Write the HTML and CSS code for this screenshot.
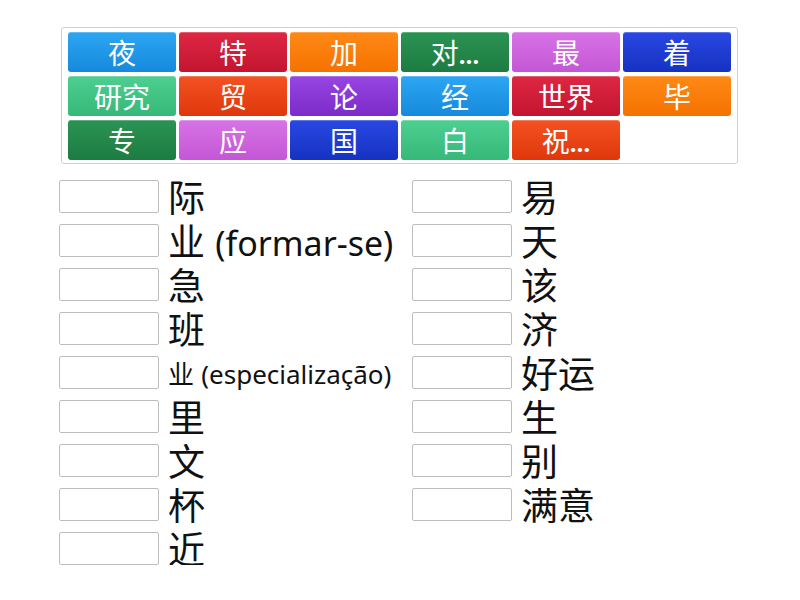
FILE: index.html
```html
<!DOCTYPE html>
<html lang="zh">
<head>
<meta charset="utf-8">
<title>Match</title>
<link rel="stylesheet" href="styles.css">
</head>
<body>
<div class="bank">
  <div class="tile blue">夜</div>
  <div class="tile red">特</div>
  <div class="tile orange">加</div>
  <div class="tile dkgreen">对<span class="dots">…</span></div>
  <div class="tile pink">最</div>
  <div class="tile navy">着</div>
  <div class="tile ltgreen">研究</div>
  <div class="tile redorange">贸</div>
  <div class="tile violet">论</div>
  <div class="tile blue">经</div>
  <div class="tile red">世界</div>
  <div class="tile orange">毕</div>
  <div class="tile dkgreen">专</div>
  <div class="tile pink">应</div>
  <div class="tile navy">国</div>
  <div class="tile ltgreen">白</div>
  <div class="tile redorange">祝<span class="dots">…</span></div>
</div>
<div class="answers">
  <div class="col">
    <div class="row"><div class="slot"></div><div class="label">际</div></div>
    <div class="row"><div class="slot"></div><div class="label">业 <span class="latin">(formar-se)</span></div></div>
    <div class="row"><div class="slot"></div><div class="label">急</div></div>
    <div class="row"><div class="slot"></div><div class="label">班</div></div>
    <div class="row"><div class="slot"></div><div class="label small">业 <span class="latin-small">(especialização)</span></div></div>
    <div class="row"><div class="slot"></div><div class="label">里</div></div>
    <div class="row"><div class="slot"></div><div class="label">文</div></div>
    <div class="row"><div class="slot"></div><div class="label">杯</div></div>
    <div class="row"><div class="slot"></div><div class="label">近</div></div>
  </div>
  <div class="col">
    <div class="row"><div class="slot"></div><div class="label">易</div></div>
    <div class="row"><div class="slot"></div><div class="label">天</div></div>
    <div class="row"><div class="slot"></div><div class="label">该</div></div>
    <div class="row"><div class="slot"></div><div class="label">济</div></div>
    <div class="row"><div class="slot"></div><div class="label">好运</div></div>
    <div class="row"><div class="slot"></div><div class="label">生</div></div>
    <div class="row"><div class="slot"></div><div class="label">别</div></div>
    <div class="row"><div class="slot"></div><div class="label">满意</div></div>
  </div>
</div>
</body>
</html>
```
FILE: styles.css
```css
html, body {
  margin: 0;
  padding: 0;
  background: #ffffff;
}
body {
  font-family: "Noto Sans", "Noto Sans CJK SC", sans-serif;
  color: #111;
}
.bank {
  margin: 27px 0 0 61px;
  width: 663px;
  padding: 4px 6px 3px 6px;
  border: 1px solid #cfcfcf;
  border-radius: 3px;
  display: grid;
  grid-template-columns: repeat(6, 108px);
  grid-auto-rows: 40px;
  column-gap: 3px;
  row-gap: 4px;
}
.tile {
  border-radius: 3px;
  color: #fff;
  font-family: "Noto Sans CJK SC", sans-serif;
  font-size: 28px;
  line-height: 40px;
  text-align: center;
  box-shadow: inset 0 1px 0 rgba(255,255,255,0.25);
}
.dots {
  font-family: "Noto Sans", sans-serif;
  font-weight: 700;
  font-size: 24px;
}
.blue { background: linear-gradient(#2ca6f2, #1689dc); }
.red { background: linear-gradient(#de2743, #c31530); }
.orange { background: linear-gradient(#ff8915, #f57200); }
.dkgreen { background: linear-gradient(#2b9453, #1d7b41); }
.pink { background: linear-gradient(#d873e6, #c356d5); }
.navy { background: linear-gradient(#2a48e2, #1632c2); }
.ltgreen { background: linear-gradient(#4dcf91, #36b879); }
.redorange { background: linear-gradient(#f45222, #de370b); }
.violet { background: linear-gradient(#9845e2, #7b2bc9); }

.answers {
  display: flex;
  margin: 16px 0 0 59px;
}
.col {
  width: 353px;
  display: flex;
  flex-direction: column;
  gap: 11px;
}
.row {
  display: flex;
  align-items: center;
  height: 33px;
  gap: 10px;
}
.slot {
  width: 98px;
  height: 31px;
  border: 1px solid #bdbdbd;
  border-radius: 2px;
  flex: none;
}
.label {
  font-family: "Liberation Sans", "Noto Sans CJK SC", sans-serif;
  font-size: 37px;
  line-height: 37px;
  white-space: nowrap;
  padding-top: 5px;
  margin-left: -1px;
}
.latin {
  font-family: "Noto Sans", sans-serif;
  font-size: 34px;
}
.label.small {
  font-size: 26px;
  line-height: 30px;
  padding-top: 4px;
}
.latin-small {
  font-family: "Noto Sans", sans-serif;
  font-size: 26px;
}
```
